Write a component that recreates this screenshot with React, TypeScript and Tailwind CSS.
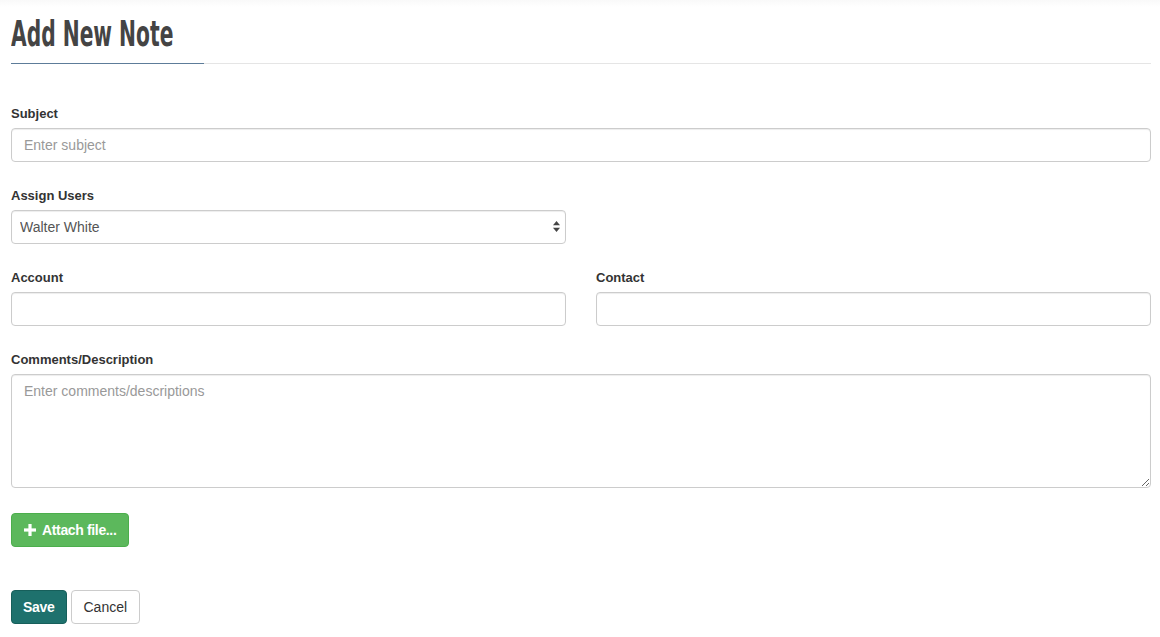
import { useState } from "react";

const labelClassName = "block h-[18px] mb-[5px] text-[13px] leading-[18px] font-bold text-[#333]";
const inputClassName =
  "block w-full h-[34px] rounded-[4px] border border-[#ccc] bg-white px-3 text-[14px] text-[#555] placeholder:text-[#999] shadow-[inset_0_1px_1px_rgba(0,0,0,0.075)] outline-none";

function PlusIcon() {
  return (
    <svg width="12" height="12" viewBox="0 0 12 12" className="mr-[6px]">
      <rect x="4.4" y="0" width="3.2" height="12" fill="#fff" />
      <rect x="0" y="4.4" width="12" height="3.2" fill="#fff" />
    </svg>
  );
}

export default function App() {
  const [subject, setSubject] = useState("");
  const [user, setUser] = useState("walter");

  return (
    <div
      className="min-h-[637px] bg-[linear-gradient(to_bottom,#f9f9f9,#ffffff_7px)] pl-[11px] pr-[9px] pt-[13px] text-[#333]"
      style={{ fontFamily: '"Liberation Sans", Arial, sans-serif' }}
    >
      <div className="border-b border-[#e5e5e5]">
        <h1
          className="inline-block w-[193px] -mb-px whitespace-nowrap border-b border-[#5d7c99] pt-px pb-[9px] text-[36px] leading-[40px] font-bold text-[#444]"
          style={{ fontFamily: '"Liberation Sans Narrow", "DejaVu Sans Condensed", sans-serif' }}
        >
          <span className="inline-block origin-left scale-x-[0.625]">Add New Note</span>
        </h1>
      </div>

      <form className="pt-[41px]" onSubmit={(e) => e.preventDefault()}>
        <div className="mb-[25px]">
          <label className={labelClassName}>Subject</label>
          <input
            type="text"
            placeholder="Enter subject"
            className={inputClassName}
            value={subject}
            onChange={(e) => setSubject(e.target.value)}
          />
        </div>

        <div className="mb-[25px] grid grid-cols-2 gap-[30px]">
          <div>
            <label className={labelClassName}>Assign Users</label>
            <div className="relative">
              <select
                className={inputClassName + " appearance-none pl-2 pr-8 text-[#333]"}
                value={user}
                onChange={(e) => setUser(e.target.value)}
              >
                <option value="walter">Walter White</option>
                <option value="jesse">Jesse Pinkman</option>
              </select>
              <svg
                width="7"
                height="11"
                viewBox="0 0 7 11"
                className="pointer-events-none absolute right-[6px] top-[11px]"
              >
                <path d="M3.5 0 L7 4.3 L0 4.3 Z" fill="#444" />
                <path d="M3.5 11 L7 6.7 L0 6.7 Z" fill="#444" />
              </svg>
            </div>
          </div>
        </div>

        <div className="mb-[25px] grid grid-cols-2 gap-[30px]">
          <div>
            <label className={labelClassName}>Account</label>
            <input type="text" className={inputClassName} />
          </div>
          <div>
            <label className={labelClassName}>Contact</label>
            <input type="text" className={inputClassName} />
          </div>
        </div>

        <div className="mb-[25px]">
          <label className={labelClassName}>Comments/Description</label>
          <textarea
            placeholder="Enter comments/descriptions"
            className="block w-full h-[114px] rounded-[4px] border border-[#ccc] bg-white px-3 py-[6px] text-[14px] leading-[20px] text-[#555] placeholder:text-[#999] shadow-[inset_0_1px_1px_rgba(0,0,0,0.075)] outline-none"
          />
        </div>

        <button
          type="button"
          className="flex h-[34px] items-center rounded-[4px] border border-[#4cae4c] bg-[#5cb85c] px-3 text-[14px] font-bold tracking-[-0.35px] text-white"
        >
          <PlusIcon />
          Attach file...
        </button>

        <div className="mt-[43px] flex gap-[4px]">
          <button
            type="submit"
            className="h-[34px] rounded-[4px] border border-[#175f5b] bg-[#1e716d] px-[11px] text-[14px] font-bold tracking-[-0.3px] text-white"
          >
            Save
          </button>
          <button
            type="button"
            className="h-[34px] rounded-[4px] border border-[#ccc] bg-white px-3 text-[14px] text-[#333]"
          >
            Cancel
          </button>
        </div>
      </form>
    </div>
  );
}
